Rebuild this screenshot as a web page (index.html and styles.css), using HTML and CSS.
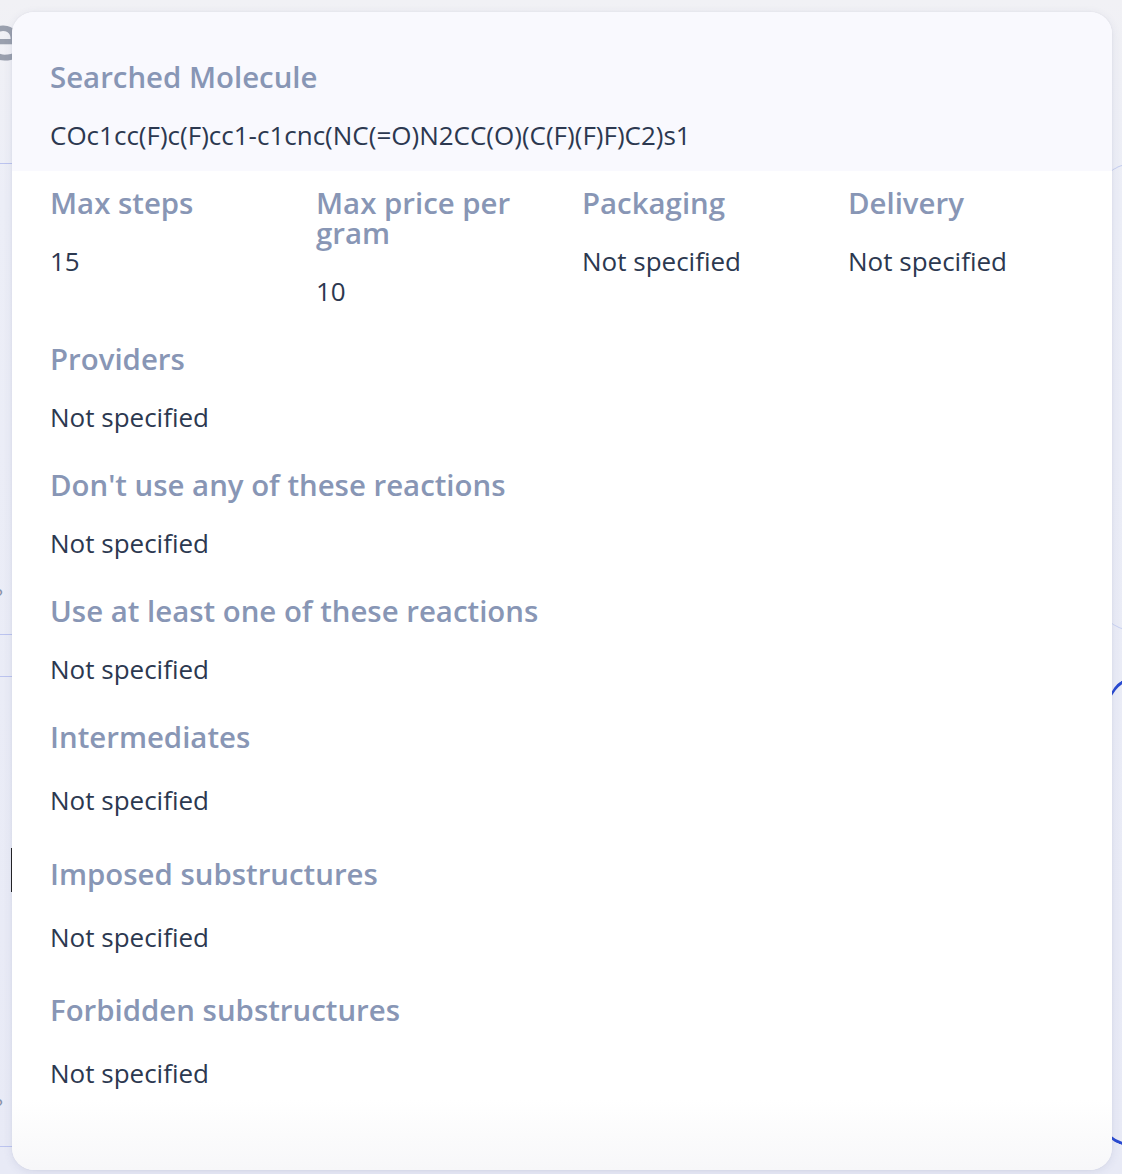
FILE: index.html
```html
<!DOCTYPE html>
<html lang="en">
<head>
<meta charset="utf-8">
<title>Search details</title>
<link rel="stylesheet" href="styles.css">
</head>
<body>
<div class="canvas">
  <span class="bg-glyph">e</span>
  <span class="bg-line l1"></span>
  <span class="bg-line l2"></span>
  <span class="bg-line l3"></span>
  <span class="bg-line l4"></span>
  <span class="bg-q q1">?</span>
  <span class="bg-q q2">?</span>
  <span class="bg-bond"></span>
  <span class="bg-arc a1"></span>
  <span class="bg-arc a2"></span>
  <span class="bg-arc a3"></span>
  <span class="bg-arc a4"></span>
</div>
<div class="card">
  <div class="card-head">
    <h2 class="label">Searched Molecule</h2>
    <p class="smiles">COc1cc(F)c(F)cc1-c1cnc(NC(=O)N2CC(O)(C(F)(F)F)C2)s1</p>
  </div>
  <div class="card-body">
    <div class="grid">
      <div class="field">
        <h3 class="label">Max steps</h3>
        <p class="value">15</p>
      </div>
      <div class="field">
        <h3 class="label narrow">Max price per gram</h3>
        <p class="value">10</p>
      </div>
      <div class="field">
        <h3 class="label">Packaging</h3>
        <p class="value">Not specified</p>
      </div>
      <div class="field">
        <h3 class="label">Delivery</h3>
        <p class="value">Not specified</p>
      </div>
    </div>
    <div class="field">
      <h3 class="label">Providers</h3>
      <p class="value">Not specified</p>
    </div>
    <div class="field">
      <h3 class="label">Don't use any of these reactions</h3>
      <p class="value">Not specified</p>
    </div>
    <div class="field">
      <h3 class="label">Use at least one of these reactions</h3>
      <p class="value">Not specified</p>
    </div>
    <div class="field wide">
      <h3 class="label">Intermediates</h3>
      <p class="value">Not specified</p>
    </div>
    <div class="field wide spaced">
      <h3 class="label">Imposed substructures</h3>
      <p class="value">Not specified</p>
    </div>
    <div class="field wide spaced">
      <h3 class="label">Forbidden substructures</h3>
      <p class="value">Not specified</p>
    </div>
  </div>
  <div class="fade"></div>
</div>
</body>
</html>
```
FILE: styles.css
```css
* { box-sizing: border-box; }
html, body { margin: 0; padding: 0; }
body {
  width: 1122px;
  height: 1174px;
  overflow: hidden;
  background: linear-gradient(180deg, #f1f1f5 0px, #eceef7 200px, #e8eaf6 1174px);
  font-family: "Open Sans", "Noto Sans", sans-serif;
  position: relative;
  padding: 12px 10px 0 12px;
}
.canvas { position: absolute; inset: 0; }
.bg-glyph {
  position: absolute; left: -16px; top: 4px;
  font-size: 64px; font-weight: 600; color: #9aa0ae; line-height: 1;
}
.bg-line { position: absolute; height: 1px; background: #bcc4ef; left: 0; width: 14px; }
.l1 { top: 163px; }
.l2 { top: 634px; }
.l3 { top: 676px; }
.l4 { top: 1146px; }
.bg-q { position: absolute; left: -6px; font-size: 20px; color: #8a93a8; line-height: 1; }
.q1 { top: 586px; }
.q2 { top: 1096px; }
.bg-bond { position: absolute; left: 0; top: 848px; width: 12px; height: 44px;
  border-right: 1.5px solid #222; }
.bg-arc { position: absolute; border-radius: 50%; border: 0 solid transparent; }
.a1 { left: 1100px; top: 164px; width: 60px; height: 60px; border-top: 1.5px solid #c3ccef; }
.a2 { left: 1100px; top: 570px; width: 60px; height: 60px; border-bottom: 1.5px solid #c7d0f1; }
.a3 { left: 1108px; top: 676px; width: 60px; height: 60px; border-top: 3px solid #2a4bd1; transform: rotate(-30deg); }
.a4 { left: 1100px; top: 1086px; width: 60px; height: 60px; border-bottom: 3px solid #2a4bd1; transform: rotate(20deg); }

.card {
  position: relative;
  width: 1100px;
  height: 1158px;
  background: #ffffff;
  border-radius: 22px;
  box-shadow: 0 2px 10px rgba(60, 70, 120, 0.10), 0 0 2px rgba(60, 70, 120, 0.08);
  overflow: hidden;
}
.card-head {
  background: #f9f9fe;
  padding: 50px 38px 21px;
}
.label {
  margin: 0;
  font-size: 29.4px;
  line-height: 30px;
  font-weight: 600;
  color: #8896b5;
}
.smiles, .value {
  margin: 28px 0 0;
  font-size: 26px;
  line-height: 30px;
  font-weight: 400;
  color: #2c3850;
}
.card-body { padding: 17px 38px 0; display: flex; flex-direction: column; gap: 38px; }
.grid {
  display: grid;
  grid-template-columns: repeat(4, 1fr);
  column-gap: 40px;
}
.narrow { max-width: 210px; }
.wide .value { margin-top: 33px; }
.spaced { margin-top: 5.5px; }
.fade {
  position: absolute; left: 0; right: 0; bottom: 0; height: 70px;
  background: linear-gradient(180deg, rgba(255,255,255,0), #f7f7f9);
}
```
